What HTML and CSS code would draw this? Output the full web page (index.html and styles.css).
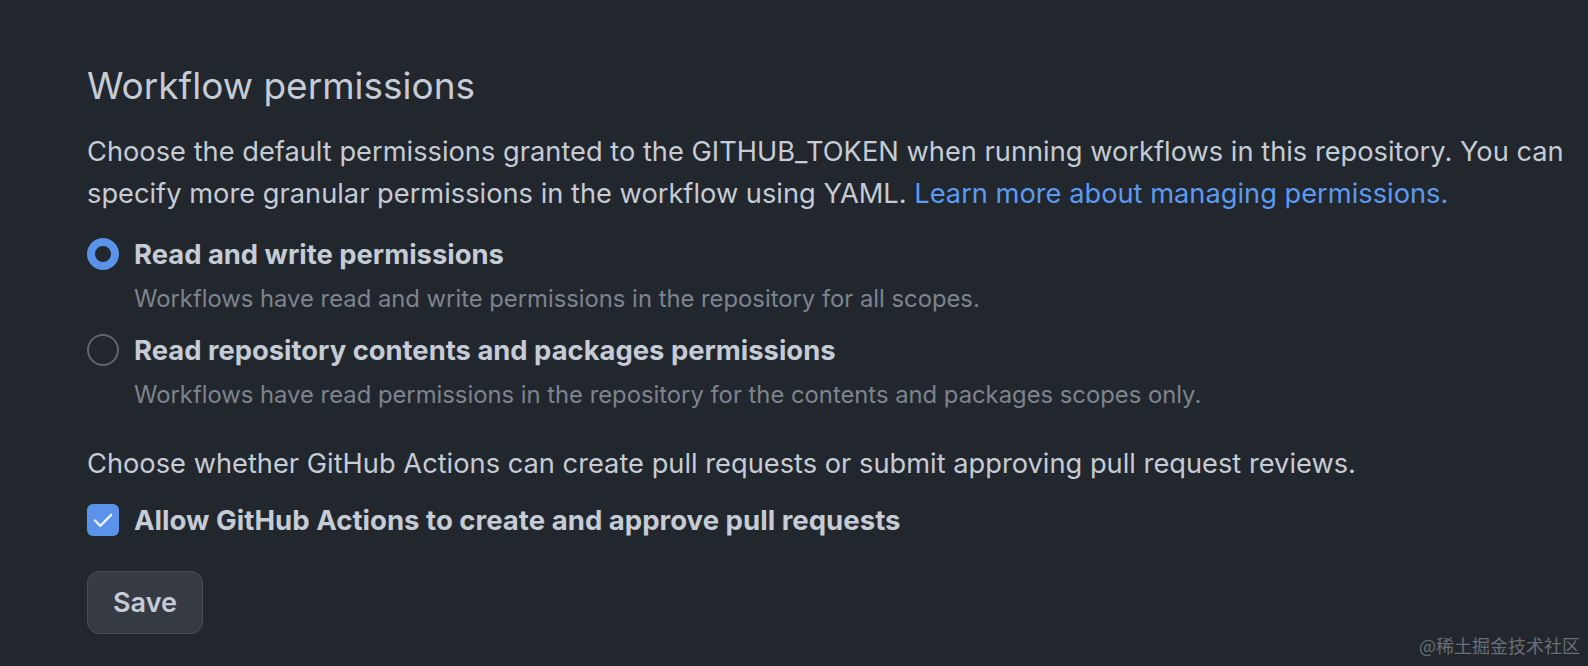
FILE: index.html
```html
<!DOCTYPE html>
<html lang="en">
<head>
<meta charset="utf-8">
<title>Workflow permissions</title>
<link rel="stylesheet" href="styles.css">
</head>
<body>
<main class="page">
  <h2 class="heading">Workflow permissions</h2>
  <p class="intro">Choose the default permissions granted to the GITHUB_TOKEN when running workflows in this repository. You can specify more granular permissions in the workflow using YAML. <a class="link" href="#">Learn more about managing permissions.</a></p>

  <div class="option">
    <span class="radio radio-checked"></span>
    <div class="option-text">
      <div class="option-label">Read and write permissions</div>
      <div class="option-note">Workflows have read and write permissions in the repository for all scopes.</div>
    </div>
  </div>

  <div class="option option-second">
    <span class="radio"></span>
    <div class="option-text">
      <div class="option-label">Read repository contents and packages permissions</div>
      <div class="option-note">Workflows have read permissions in the repository for the contents and packages scopes only.</div>
    </div>
  </div>

  <p class="intro intro-second">Choose whether GitHub Actions can create pull requests or submit approving pull request reviews.</p>

  <div class="check-row">
    <span class="checkbox">
      <svg width="32" height="32" viewBox="0 0 32 32"><path d="M8 16.5 L13.3 21.8 L24.2 10.8" fill="none" stroke="#e8eef8" stroke-width="2.4" stroke-linecap="round" stroke-linejoin="round"/></svg>
    </span>
    <span class="option-label check-label">Allow GitHub Actions to create and approve pull requests</span>
  </div>

  <button class="save">Save</button>
</main>
<div class="watermark">@稀土掘金技术社区</div>
</body>
</html>
```

FILE: styles.css
```css
html, body {
  margin: 0;
  padding: 0;
  background: #22262d;
  height: 100%;
}
body {
  font-family: Inter, "Noto Sans", "Liberation Sans", sans-serif;
  color: #c5ccd5;
  position: relative;
  overflow: hidden;
}
.page {
  padding: 56px 0 0 87px;
}
.heading {
  margin: 0;
  font-size: 37px;
  line-height: 60px;
  font-weight: 400;
  color: #c5ccd5;
}
.intro {
  margin: 15px 0 0;
  font-size: 27.25px;
  line-height: 42px;
  max-width: 1495px;
}
.link {
  color: #5b9bf2;
  text-decoration: none;
}
.option {
  display: flex;
  gap: 15px;
  margin-top: 18px;
}
.option-second {
  margin-top: 12px;
}
.radio {
  width: 32px;
  height: 32px;
  box-sizing: border-box;
  border-radius: 50%;
  border: 2px solid #5f6670;
  margin-top: 5px;
  flex: none;
}
.radio-checked {
  border: 8.5px solid #5b93ea;
}
.option-label {
  font-size: 27.4px;
  line-height: 42px;
  font-weight: 700;
  color: #c5ccd5;
}
.check-label {
  font-size: 27.6px;
}
.option-note {
  margin-top: 6px;
  font-size: 23.8px;
  line-height: 36px;
  color: #7d848e;
}
.intro-second {
  margin-top: 30px;
}
.check-row {
  display: flex;
  align-items: center;
  gap: 15px;
  margin-top: 14px;
}
.checkbox {
  width: 32px;
  height: 32px;
  border-radius: 6px;
  background: #5b93ea;
  flex: none;
  display: block;
}
.checkbox svg {
  display: block;
}
.save {
  display: block;
  margin-top: 30px;
  width: 116px;
  height: 63px;
  border-radius: 12px;
  border: 1.5px solid #474d56;
  background: #363b43;
  color: #c5ccd5;
  font-family: inherit;
  font-size: 27px;
  font-weight: 600;
  padding: 0;
}
.watermark {
  position: absolute;
  right: 8px;
  bottom: 8px;
  font-family: "Noto Sans CJK SC", sans-serif;
  font-size: 18px;
  color: #6a6f76;
}
```
